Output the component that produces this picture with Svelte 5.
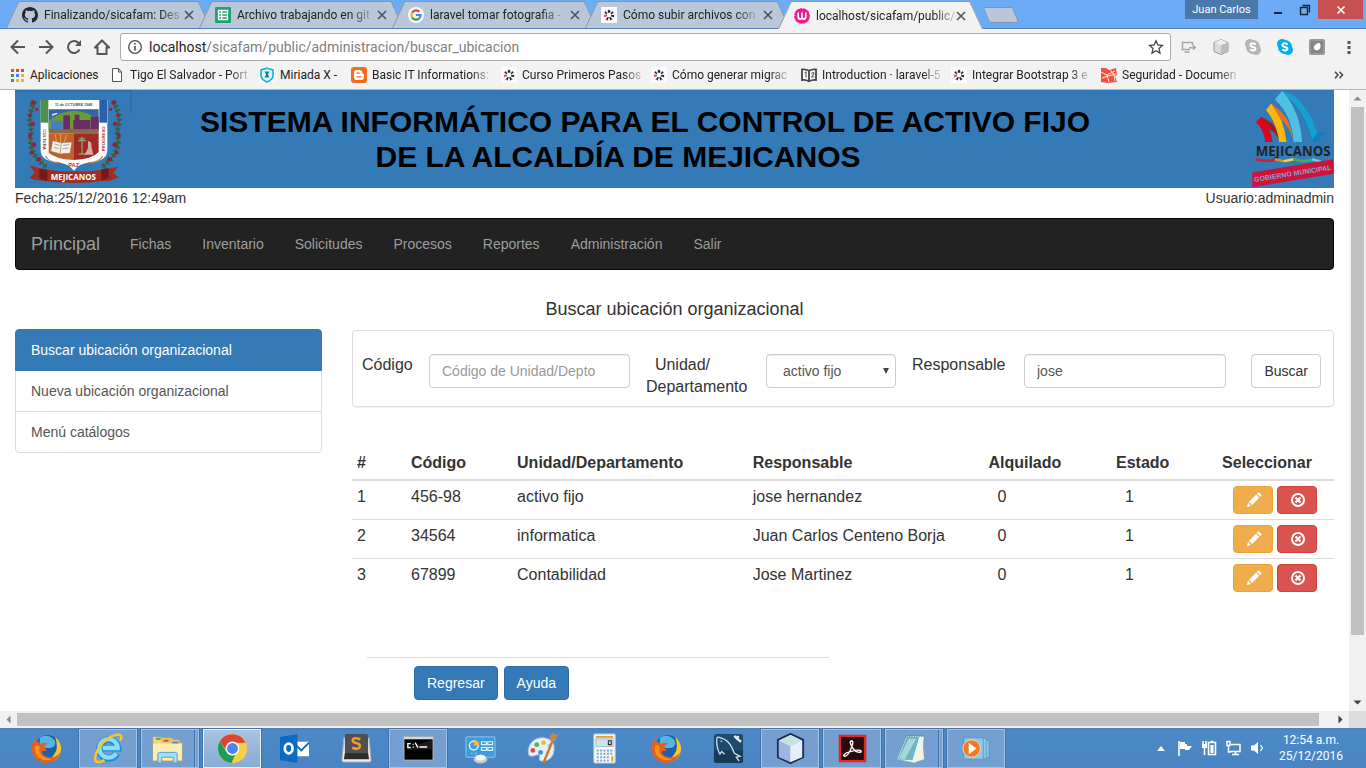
<script>
  const tabs = [
    { icon: 'github', title: 'Finalizando/sicafam: Des' },
    { icon: 'sheets', title: 'Archivo trabajando en git' },
    { icon: 'google', title: 'laravel tomar fotografia -' },
    { icon: 'styde', title: 'Cómo subir archivos con' },
    { icon: 'wamp', title: 'localhost/sicafam/public/', active: true }
  ];

  const bookmarks = [
    { icon: 'apps', title: 'Aplicaciones', size: 'apps' },
    { icon: 'file', title: 'Tigo El Salvador - Port' },
    { icon: 'miriada', title: 'Miriada X -', size: 'short' },
    { icon: 'blogger', title: 'Basic IT Informations:' },
    { icon: 'styde', title: 'Curso Primeros Pasos' },
    { icon: 'styde', title: 'Cómo generar migrac' },
    { icon: 'book', title: 'Introduction · laravel-5' },
    { icon: 'styde', title: 'Integrar Bootstrap 3 e' },
    { icon: 'laravel', title: 'Seguridad - Documen' }
  ];

  const menu = ['Fichas', 'Inventario', 'Solicitudes', 'Procesos', 'Reportes', 'Administración', 'Salir'];
  const side = ['Buscar ubicación organizacional', 'Nueva ubicación organizacional', 'Menú catálogos'];

  const rows = [
    { codigo: '456-98', unidad: 'activo fijo', responsable: 'jose hernandez', alquilado: 0, estado: 1 },
    { codigo: '34564', unidad: 'informatica', responsable: 'Juan Carlos Centeno Borja', alquilado: 0, estado: 1 },
    { codigo: '67899', unidad: 'Contabilidad', responsable: 'Jose Martinez', alquilado: 0, estado: 1 }
  ];

  const programs = [
    { icon: 'firefox', name: 'Firefox' },
    { icon: 'ie', name: 'Internet Explorer', open: true },
    { icon: 'explorer', name: 'Explorador', open: true, stacked: true },
    { icon: 'chrome', name: 'Chrome', open: true, current: true },
    { icon: 'outlook', name: 'Outlook' },
    { icon: 'sublime', name: 'Sublime Text' },
    { icon: 'cmd', name: 'Consola', open: true },
    { icon: 'panel', name: 'Panel de control' },
    { icon: 'paint', name: 'Paint' },
    { icon: 'calc', name: 'Calculadora' },
    { icon: 'firefox', name: 'Firefox' },
    { icon: 'mysql', name: 'MySQL Workbench' },
    { icon: 'netbeans', name: 'NetBeans', open: true },
    { icon: 'acrobat', name: 'Acrobat', open: true },
    { icon: 'notepad', name: 'Bloc de notas', open: true, stacked: true },
    { icon: 'media', name: 'Reproductor', open: true }
  ];

  let codigo = $state('');
  let responsable = $state('jose');
</script>

{#snippet favicon(name)}
  <svg class="fav" viewBox="0 0 16 16" aria-hidden="true">
    {#if name === 'github'}
      <path fill="#24292e" d="M8 0C3.58 0 0 3.58 0 8c0 3.54 2.29 6.53 5.47 7.59.4.07.55-.17.55-.38 0-.19-.01-.82-.01-1.49-2.01.37-2.53-.49-2.69-.94-.09-.23-.48-.94-.82-1.13-.28-.15-.68-.52-.01-.53.63-.01 1.08.58 1.23.82.72 1.21 1.87.87 2.33.66.07-.52.28-.87.51-1.07-1.78-.2-3.64-.89-3.64-3.95 0-.87.31-1.59.82-2.15-.08-.2-.36-1.02.08-2.12 0 0 .67-.21 2.2.82a7.6 7.6 0 0 1 4 0c1.53-1.04 2.2-.82 2.2-.82.44 1.1.16 1.92.08 2.12.51.56.82 1.27.82 2.15 0 3.07-1.87 3.75-3.65 3.95.29.25.54.73.54 1.48 0 1.07-.01 1.93-.01 2.2 0 .21.15.46.55.38A8 8 0 0 0 16 8c0-4.42-3.58-8-8-8z" />
    {:else if name === 'sheets'}
      <rect width="16" height="16" rx="1" fill="#23a172" />
      <path fill="none" stroke="#fff" stroke-width="1.3" d="M3.5 3.5h9v9h-9zM3.5 6.5h9M3.5 9.5h9M6.7 3.5v9" />
    {:else if name === 'google'}
      <circle cx="8" cy="8" r="8" fill="#f8f9fb" />
      <g fill="none" stroke-width="2.2">
        <path stroke="#ea4335" d="M4 5.8A4.6 4.6 0 0 1 11.4 4.8" />
        <path stroke="#fbbc05" d="M4 10.2A4.6 4.6 0 0 1 4 5.8" />
        <path stroke="#34a853" d="M11 11.6A4.6 4.6 0 0 1 4 10.2" />
        <path stroke="#4285f4" d="M8 8h4.6A4.6 4.6 0 0 1 11 11.6" />
      </g>
    {:else if name === 'styde'}
      <rect width="16" height="16" fill="#fcfcfd" />
      <path fill="#1d2638" d="m7 2.500 1 1 1-1 .4 3.300H6.700zM3 5.300l1.200-.2.500-1.300 1.600 3-.6.700zM13 5.300l-1.200-.2-.5-1.300-1.600 3 .6.700zM9.800 8.200l3.600-.4-.6 1.200.7 1.200-3.400-.6zM6.800 9.800l1 .7-1.300 3.200-.8-1.100-1.400.1zM9.200 9.800l-1 .7 1.300 3.200.8-1.100 1.400.1z" />
      <path fill="#e0474c" d="m2.600 7.600 3.600.4-.2 1.300-3.200 1 .5-1.400z" />
    {:else if name === 'wamp'}
      <rect x="1" y="1" width="14" height="14" rx="5" fill="#f21b8e" />
      <path fill="none" stroke="#fff" stroke-width="1.600" d="M4.200 4.500v4q0 2.600 2 2.600T8 8.800V4.500v4.300q0 2.300 1.900 2.300t1.900-2.600v-4" />
      <circle cx="8" cy="8" r="7.400" fill="none" stroke="#f21b8e" stroke-dasharray="3 1" />
    {:else if name === 'apps'}
      <path fill="#dd4b3e" d="M2 2h3v3H2zM7 2h3v3H7zM12 2h3v3h-3z" />
      <path fill="#3f9a5b" d="M2 7h3v3H2zM2 12h3v3H2z" />
      <path fill="#4a7fe0" d="M7 7h3v3H7z" />
      <path fill="#e9b42f" d="M12 7h3v3h-3zM7 12h3v3H7zM12 12h3v3h-3z" />
    {:else if name === 'file'}
      <path fill="#fff" stroke="#555" d="M3.500 1.500h6l3 3.500v9.500h-9zM9.500 1.500V5h3" />
    {:else if name === 'miriada'}
      <rect width="16" height="16" fill="#fff" />
      <path fill="#dff6f9" stroke="#1ab3c9" stroke-width="1.700" d="M8 1.200 14 3v5.500q0 4-6 6.500-6-2.500-6-6.500V3z" />
      <path fill="#137f96" d="M5.500 4.500h5L8.900 7.500l1.600 3h-5l1.600-3z" />
    {:else if name === 'blogger'}
      <rect width="16" height="16" rx="3" fill="#f26a1b" />
      <path fill="#fff" d="M5.600 3h3q2.600 0 2.600 2.700 0 1 .9 1 .9.100.9 1.200v2.200Q13 13 10.200 13H5.800Q3 13 3 10.200V5.800Q3 3 5.600 3z" />
      <path stroke="#f26a1b" stroke-width="1.300" stroke-linecap="round" d="M6 6.200h2.300M6 9.800h4" />
    {:else if name === 'book'}
      <path fill="#fff" stroke="#444" stroke-width="1.800" d="M1 2.500q4-.5 7 1.300 3-1.800 7-1.300V13q-4-.5-7 1.300Q5 12.500 1 13zM8 4v10" />
      <path fill="none" stroke="#666" stroke-width="1.200" d="M3.500 5.500 5 5v5.500M10.500 6.500q2.500-2 2.300.3L10.800 10h2.500" />
    {:else if name === 'laravel'}
      <path fill="#f4503c" d="M0 1h5l3 2 7-2 1 7-2 1 2 6-9 1-7-1z" />
      <path stroke="#fbe9e6" fill="none" d="M0 5 6 8l8-4M6 8l2 7M1 11l6-2 8-2M9 2l4 6 1 6" />
    {/if}
  </svg>
{/snippet}

{#snippet program(name)}
  <svg class="prog" viewBox="0 0 32 32" aria-hidden="true">
    {#if name === 'firefox'}
      <circle cx="17" cy="15" r="13" fill="#1f5fa8" />
      <path fill="#56b3e6" d="M9 5q8-5 15 2 3 5-2 8-8 2-13-3z" />
      <path fill="#f6c42c" d="M25 4q7 6 6 14-2 11-13 12l6-8q5-6 1-18z" />
      <path fill="#e4601c" d="M4 6q-4 6-3 12 2 12 15 13 11-1 14-11-5 6-11 5-7-1-8-6l5-1q0-2-3-3 3-4 5-4-4-2-7 0-3 0-4-2Q5 8 4 6z" />
      <path fill="#f7941e" d="M5 12q-3 8 3 13 6 5 14 2-9 0-13-6-1-4 0-7z" />
    {:else if name === 'ie'}
      <path fill="none" stroke="#1b8fd6" stroke-width="7" d="M24.500 21a9.500 9.500 0 1 1 1-5.500H10" />
      <path fill="none" stroke="#8bdcfa" stroke-width="4.500" d="M24 21a9.500 9.500 0 1 1 1.500-5.500H10" />
      <path fill="none" stroke="#f6c62d" stroke-width="2.600" d="M28 8q4-8-5-6Q9 7 4 19q-5 12 3 11 2 0 5-2" />
    {:else if name === 'explorer'}
      <path fill="#f0d67d" stroke="#cda94b" stroke-width=".6" d="M1 4h8l1 2h12l1 4h8v19H1z" />
      <path fill="#e9c35c" d="M10 5h10v5H10zM19 7h9v5h-9z" />
      <path fill="#52a552" d="M4 5h5v2H4z" /><path fill="#d8523c" d="M12 7h5v2h-5z" /><path fill="#3b8fd6" d="M21 9h6v2h-6z" />
      <path fill="#fbeeb5" d="M1 11h30v17H1z" />
      <path fill="#a6dcf4" stroke="#4ca3d4" d="M6 31V22q0-2 2-2h16q2 0 2 2v9h-4v-6H10v6z" />
    {:else if name === 'chrome'}
      <circle cx="16" cy="16" r="15" fill="#f9cf45" />
      <path fill="#dc4437" d="M3 8.500a15 15 0 0 1 26.500 1.500H16q-6 0-7 7z" />
      <path fill="#1f9d58" d="M3 8.500 9.800 19.500q3 5 9 3L15 31A15 15 0 0 1 3 8.500z" />
      <circle cx="16" cy="16" r="7.200" fill="#f3f6fb" /><circle cx="16" cy="16" r="5.600" fill="#4a86ee" />
    {:else if name === 'outlook'}
      <path fill="#fff" d="M17 9h14v15H17z" />
      <path fill="none" stroke="#0a6cc0" stroke-width="2" d="m18 13 5 5 8-8" />
      <path fill="#0a6cc0" d="m1 4 18-3v30L1 28z" />
      <ellipse cx="10" cy="16" rx="4" ry="5" fill="none" stroke="#fff" stroke-width="2.800" />
    {:else if name === 'sublime'}
      <path fill="#ededed" stroke="#aaa" d="m3 5-2 23q0 2 2 2h26q2 0 2-2L29 5z" />
      <rect x="4" y="1" width="24" height="22" rx="2" fill="#505050" />
      <path fill="#2d2d2d" d="M4 21h24l1 6H3z" />
      <path fill="none" stroke="#f79a34" stroke-width="2.600" d="M20 6.500q-7-2.500-8 .8 0 2.600 4 3.200T19.500 14q-1 3.500-8 1.300" />
    {:else if name === 'cmd'}
      <path fill="#000" stroke="#b9b9b9" d="M1 4h30v24H1z" /><path fill="#d8d8d8" d="M1 4h30v2.500H1z" />
      <path fill="#1d1d1d" d="M2 17 30 7v10z" />
      <path fill="none" stroke="#fff" stroke-width="1.400" d="M8 11H5v4h3M10.500 11v1M10.500 14v1M12.500 10l3 5M17 14.500h8" />
    {:else if name === 'panel'}
      <rect x="1" y="4" width="30" height="21" rx="1" fill="#3d9bdc" stroke="#8ccaf2" />
      <circle cx="9" cy="13" r="4.500" fill="none" stroke="#e1f3fd" stroke-width="1.500" /><path fill="#f6b73c" d="M9 13V7q5 0 6 6z" />
      <path fill="none" stroke="#dff2fc" stroke-width="1.200" d="M17 9h5v3h-5zM23.500 9h5v3h-5zM17 15h5v3h-5zM23.500 15h5v3h-5z" />
      <circle cx="7" cy="21" r="1" fill="#f6b73c" /><circle cx="11" cy="21" r="1" fill="#f6b73c" />
      <ellipse cx="16" cy="27" rx="7" ry="4.500" fill="#c6cacf" /><ellipse cx="16" cy="25.500" rx="5" ry="3" fill="#f4f5f6" />
    {:else if name === 'paint'}
      <path fill="#e6f1fa" stroke="#a8c4dc" d="M3 12Q8 4 18 5q11 2 10 12-1 12-13 12-3 0-2-4t-4-2-7 0q-2-5 1-11z" />
      <circle cx="6" cy="18" r="2.500" fill="#e24c3d" /><circle cx="10" cy="12" r="2.500" fill="#59b24c" /><circle cx="17" cy="10" r="2.500" fill="#f3b63a" /><circle cx="14" cy="20" r="2.500" fill="#3a8ed4" /><circle cx="23" cy="13" r="2" fill="#9ed3f0" />
      <path stroke="#d6742b" stroke-width="2.500" d="M26 9 17 31" /><path fill="#b98a5c" d="m23 4 3-4 6 2-3 7-5-1z" />
    {:else if name === 'calc'}
      <rect x="5" y="1" width="22" height="30" rx="1" fill="#f4f8fb" stroke="#b7cbdc" /><path fill="#f39b32" d="M7 3h18v2H7z" />
      <path fill="#cfe2f0" stroke="#8eabc2" stroke-width=".7" d="M7 6h18v8H7z" /><path fill="none" stroke="#333" stroke-width="1.200" d="M20 8h3v4h-3z" />
      <path stroke="#7ea6c9" stroke-width="2" stroke-dasharray="2 1.500" d="M8 18h17M8 21.500h17M8 25h14M8 28.500h14" /><path stroke="#f39b32" stroke-width="2" d="M24 24v5.500" />
    {:else if name === 'mysql'}
      <rect x="1" y="1" width="30" height="30" rx="3" fill="#1f4a6b" /><path fill="#173a56" d="M1 18h30v10q0 3-3 3H4q-3 0-3-3z" />
      <path fill="none" stroke="#d5e4ef" stroke-width="1.300" d="M7 22Q3 13 4 6q0-3 4-1 8 2 12 11l2 5 6 3-4 1 3 4M7 22l2-3 3 3M8 8l1 1" />
      <path stroke="#e9f1f7" stroke-width="2.400" fill="none" d="m22 3 3 3 4 3M25 6l1-3" />
    {:else if name === 'netbeans'}
      <path fill="#e6f0f8" stroke="#1c2a5c" stroke-width="2" d="M16 1 29 7v18l-13 6L3 25V7z" />
      <path fill="#c6e2dc" d="M16 2 28 8l-12 6L4 8z" /><path fill="#9cb4e2" d="m4 8 12 6v16L4 25z" /><path fill="#e7edfa" d="m28 8-12 6v16l12-5z" />
    {:else if name === 'acrobat'}
      <path fill="#2b0a0b" stroke="#e0281f" stroke-width="2.500" d="M3 3h26v26H3z" />
      <path fill="none" stroke="#fff" stroke-width="1.500" d="M8 24q4 0 8-12 1-4-1-4-3 1 1 7 3 5 8 5 2-1 0-2-4-1-9 1-6 1-8 4 0 1 1 1z" />
    {:else if name === 'notepad'}
      <path fill="#e9f5f6" stroke="#7ba8ae" stroke-width=".6" d="M11 3h18l-2 24-8 4L1 27z" />
      <path fill="#6fb5bd" d="M11 4h13L17 28 2 27z" /><path fill="#a5d7db" d="M13 6h8L9 27l-6-1z" /><path fill="#f8f4da" d="m27 5 2 22-9 3z" />
      <path stroke="#617e86" stroke-width="2" stroke-dasharray="1 1.500" d="M11 3h18" />
    {:else if name === 'media'}
      <path fill="#8fc7ea" stroke="#4b94c6" stroke-width=".8" d="M3 5h20v22H3zM23 5l3 1v20l-3 1M26 7l3 1v17l-3 1" />
      <circle cx="11" cy="16" r="9" fill="#ee7b22" stroke="#fbd5b4" /><path fill="#fff" d="m8 10 8 6-8 6z" />
    {/if}
  </svg>
{/snippet}

<div class="desktop">
  <header class="browser">
    <div class="strip">
      {#each tabs as tab}
        <div class="tab" class:active={tab.active}>
          {@render favicon(tab.icon)}
          <span class="tab-title fade">{tab.title}</span>
          <button class="tab-close" aria-label="Cerrar pestaña">
            <svg viewBox="0 0 10 10" width="10" height="10"><path d="m1 1 8 8M9 1 1 9" stroke="#4f5257" stroke-width="1.600" /></svg>
          </button>
        </div>
      {/each}
      <button class="new-tab" aria-label="Nueva pestaña"></button>
      <div class="window-buttons">
        <button class="profile">Juan Carlos</button>
        <button class="win" aria-label="Minimizar"><svg viewBox="0 0 10 10" width="10" height="10"><path d="M1 8h8" stroke="#1b2430" stroke-width="2" /></svg></button>
        <button class="win" aria-label="Restaurar"><svg viewBox="0 0 12 12" width="12" height="12"><path d="M1.500 3.500h7v7h-7zM3.500 1.500h7v7" fill="none" stroke="#1b2430" stroke-width="1.400" /></svg></button>
        <button class="win-close" aria-label="Cerrar"><svg viewBox="0 0 10 10" width="10" height="10"><path d="m1.500 1.500 7 7M8.500 1.500l-7 7" stroke="#fff" stroke-width="1.600" /></svg></button>
      </div>
    </div>

    <div class="toolbar">
      <button class="tool" aria-label="Atrás"><svg viewBox="0 0 16 16"><path d="M15 8H2M8 1.500 1.500 8 8 14.500" /></svg></button>
      <button class="tool" aria-label="Adelante"><svg viewBox="0 0 16 16"><path d="M1 8h13M8 1.500 14.500 8 8 14.500" /></svg></button>
      <button class="tool" aria-label="Recargar"><svg viewBox="0 0 16 16"><path d="M13.500 10.500A6 6 0 1 1 12.500 4" /><path class="solid" d="M15 1v6H9z" /></svg></button>
      <button class="tool" aria-label="Inicio"><svg viewBox="0 0 16 16"><path d="M1 8.500 8 1.500l7 7h-2.500V15h-9V8.500z" /></svg></button>
      <div class="omnibox">
        <svg viewBox="0 0 16 16" width="16" height="16" aria-hidden="true"><circle cx="8" cy="8" r="6.300" fill="none" stroke="#4d4d4d" stroke-width="1.300" /><path d="M8 7v4.500M8 4v1.600" stroke="#4d4d4d" stroke-width="1.600" /></svg>
        <span class="url"><b>localhost</b>/sicafam/public/administracion/buscar_ubicacion</span>
        <button class="star" aria-label="Marcador"><svg viewBox="0 0 16 16" width="16" height="16"><path d="m8 1.800 1.900 4.200 4.500.5L11 9.600l1 4.500-4-2.300-4 2.300 1-4.500-3.400-3.100 4.500-.5z" fill="none" stroke="#444" stroke-width="1.300" /></svg></button>
      </div>
      <div class="extensions">
        <button class="ext" aria-label="Transmitir"><svg viewBox="0 0 16 16"><path d="M9 10.500H1.500v-7h10v3M3.500 13h5" fill="none" stroke="#a7a7a7" stroke-width="1.500" /><path d="M8 8h4V5.500L15.500 8.500 12 11.500V9.500H8z" fill="#a7a7a7" /></svg></button>
        <button class="ext" aria-label="Cubo"><svg viewBox="0 0 16 16"><path d="m8 .5 7 3v9l-7 3-7-3v-9z" fill="#dadada" stroke="#999" /><path d="m8 6 6.500-2.500V12L8 15z" fill="#bcbcbc" /><path d="m1.500 3.500 6.500-3 6.500 3L8 6z" fill="#eee" /></svg></button>
        <button class="ext" aria-label="Skype desconectado"><svg viewBox="0 0 16 16"><circle cx="5" cy="5" r="5" fill="#b5b5b5" /><circle cx="11" cy="11" r="5" fill="#b5b5b5" /><circle cx="8" cy="8" r="7" fill="#b5b5b5" /><path d="M10.800 5.400Q6 3 5.400 5.800q0 1.800 2.600 2.200t2.500 2.200Q9.800 12.500 5.200 10.600" fill="none" stroke="#fff" stroke-width="1.900" /></svg></button>
        <button class="ext" aria-label="Skype"><svg viewBox="0 0 16 16"><circle cx="5" cy="5" r="5" fill="#00aff0" /><circle cx="11" cy="11" r="5" fill="#00aff0" /><circle cx="8" cy="8" r="7" fill="#00aff0" /><path d="M10.800 5.400Q6 3 5.400 5.800q0 1.800 2.600 2.200t2.500 2.200Q9.800 12.500 5.200 10.600" fill="none" stroke="#fff" stroke-width="1.900" /></svg></button>
        <button class="ext" aria-label="Pluma"><svg viewBox="0 0 16 16"><rect width="16" height="16" rx="2" fill="#9a9a9a" /><rect x="2" y="2" width="12" height="12" fill="#858585" /><path d="M11 4q2 6-3 7.500-4-.5-3-4Q7 3.500 11 4z" fill="#fff" /></svg></button>
        <button class="ext" aria-label="Menú"><svg viewBox="0 0 16 16"><path d="M6.500 2h3v3h-3zM6.500 7h3v3h-3zM6.500 12h3v3h-3z" fill="#555" /></svg></button>
      </div>
    </div>

    <nav class="bookmarks" aria-label="Marcadores">
      {#each bookmarks as mark}
        <a class="bookmark {mark.size ?? ''}" href="#marcador">{@render favicon(mark.icon)}<span class:fade={!mark.size}>{mark.title}</span></a>
      {/each}
      <button class="more" aria-label="Más marcadores"><svg viewBox="0 0 10 8" width="10" height="8"><path d="m1 .8 3 3.200-3 3.200M5.500.8l3 3.200-3 3.200" fill="none" stroke="#444" stroke-width="1.500" /></svg></button>
    </nav>
  </header>

  <div class="viewport">
    <main class="page">
      <div class="banner">
        <svg class="arms" viewBox="45 6 351 294" role="img" aria-label="Escudo de Mejicanos">
          <path fill="#2c6ca5" d="M45 6h349v4H45zM390 6h4v70h-4z" />
          <g fill="none" stroke="#3c5a3a" stroke-width="4">
            <path d="M108 40Q78 90 96 130q-20 60 44 108M336 40q34 50 14 90 20 60-44 108" />
            <path stroke-width="16" stroke-dasharray="5 9" d="M104 40Q78 90 96 130q-20 60 44 108M340 40q30 50 10 90 20 60-44 108" />
          </g>
          <g fill="#8f2530">
            <circle cx="98" cy="44" r="7" /><circle cx="110" cy="64" r="5" /><circle cx="90" cy="82" r="6" /><circle cx="98" cy="108" r="7" /><circle cx="90" cy="142" r="6" /><circle cx="102" cy="170" r="7" /><circle cx="94" cy="194" r="6" /><circle cx="116" cy="214" r="7" />
            <circle cx="342" cy="44" r="7" /><circle cx="332" cy="64" r="5" /><circle cx="354" cy="82" r="6" /><circle cx="346" cy="108" r="7" /><circle cx="356" cy="142" r="6" /><circle cx="344" cy="170" r="7" /><circle cx="350" cy="194" r="6" /><circle cx="328" cy="214" r="7" />
          </g>
          <path fill="#a32c22" d="M88 232q60 20 132 18 74 2 134-14l-14 20 16 12q-28 14-46 10-90 14-176 0-22 2-46-8l16-16z" />
          <path fill="#741b17" d="M118 242l24 4v34l-24-8zM326 240l-22 4v34l22-8z" />
          <path fill="#fff" d="M122 36h200v150q0 30-44 36-44 4-56 26-14-22-58-26-42-6-42-36z" />
          <path fill="#4f8f4a" d="M122 36h23v68h-23z" /><path fill="#2b5fa8" d="M298 36h23v68h-23z" />
          <path fill="#3365a5" d="M146 64h150v64H146z" /><path fill="#6c9a35" d="M146 98q40-30 76-30 40 0 74 30v26H146z" />
          <path fill="#e4e9f3" d="M156 78l16-4v4l-16 6z" /><path fill="#4b7cc4" d="M160 100h28v26h-28zM154 82h5v42h-5z" />
          <path fill="#6b2a6b" d="M190 82h20v44h-20zM220 96h50v28h-50zM224 80h14v20h-14zM272 86h24v38h-24z" />
          <path fill="#8b6a4a" d="M146 124h150v12H146z" />
          <path fill="#c3602b" d="M146 136h74v80q-56-4-74-22z" /><path fill="#a22a25" d="M220 136h76v56q-20 22-76 24z" />
          <path fill="none" stroke="#f0a34c" stroke-width="3" d="m166 140 4 24M182 138v26M200 140l-8 24" />
          <path fill="#f4f0e4" stroke="#8a7b62" stroke-width="2" d="m158 158 26 6 32-2-6 34-28 2-30-8z" /><path stroke="#8a7b62" stroke-width="2" d="m184 164-4 32M164 168l14 4M162 178l14 4M190 172l18-2M188 182l18-2" />
          <path fill="none" stroke="#8fa06a" stroke-width="4" d="M246 146v50M234 158h24M238 150q8 8 16 0M236 198h22" /><path fill="#d9a9a3" d="M264 160q12 0 10 14l6 26h-26l10-20z" />
          <path fill="none" stroke="#b98a5a" stroke-width="4" d="M136 204q10 20 44 20M308 204q-10 20-44 20" />
          <text x="221" y="54" font-size="11" font-weight="700" text-anchor="middle" fill="#555" font-family="Liberation Sans, sans-serif">11 de OCTUBRE 1948</text>
          <text transform="translate(128 124) rotate(90)" font-size="13" font-weight="700" fill="#a3372c" font-family="Liberation Sans, sans-serif">CULTURA</text>
          <text transform="translate(314 190) rotate(-90)" font-size="13" font-weight="700" fill="#a3372c" font-family="Liberation Sans, sans-serif">PROGRESO</text>
          <text x="221" y="238" font-size="17" font-weight="700" text-anchor="middle" fill="#a3372c" font-family="Liberation Sans, sans-serif">PAZ</text>
          <text x="220" y="277" font-size="24" font-weight="700" text-anchor="middle" fill="#fff" font-family="Open Sans, sans-serif">MEJICANOS</text>
        </svg>
        <h1>SISTEMA INFORMÁTICO PARA EL CONTROL DE ACTIVO FIJO <span>DE LA ALCALDÍA DE MEJICANOS</span></h1>
        <svg class="brand-mark" viewBox="455 6 247 294" role="img" aria-label="Mejicanos Gobierno Municipal">
          <path fill="#e2001a" d="m467 102 16-16q28 30 34 76h-22q-4-38-28-60z" /><path fill="#9f1d22" d="m483 86 34 20q14 18 18 50-10-26-26-30z" />
          <path fill="#f9b80e" d="m497 66 16-20q38 44 46 116h-22q-8-60-40-96z" /><path fill="#dd7426" d="m513 46 30 24q30 30 36 86-14-46-36-60z" />
          <path fill="#4fc0df" d="m524 34 22-26q54 60 60 154h-26q-4-80-56-128z" /><path fill="#15a0cf" d="m546 8 34 12q58 54 72 122-8 8-14 20-20-86-72-132z" />
          <path fill="#0f7fc0" d="M636 162q4-30 48-30-22 8-26 30z" />
          <text x="579" y="204" font-size="40" font-weight="700" text-anchor="middle" fill="#1f2429" font-family="Open Sans, sans-serif">MEJICANOS</text>
          <g fill="none" stroke-width="8"><path stroke="#cf2136" d="M466 214q30 8 58 2" /><path stroke="#e58a2d" d="M524 214l26 6" /><path stroke="#f2d43b" d="M550 220l30-6" /><path stroke="#56ab3c" d="M580 214l28 6" /><path stroke="#3daf70" d="M608 220l28-4" /><path stroke="#74c8e4" d="m636 214 28 8" /></g>
          <path fill="#cf1238" d="m456 254 243-40 2 44-245 40z" />
          <text transform="translate(579 264) rotate(-9)" font-size="21" font-weight="700" text-anchor="middle" fill="#7fa3cd" font-family="Liberation Sans, sans-serif">GOBIERNO MUNICIPAL</text>
        </svg>
      </div>
      <div class="status"><span>Fecha:25/12/2016 12:49am</span><span>Usuario:adminadmin</span></div>

      <nav class="navbar">
        <a class="brand" href="#principal">Principal</a>
        {#each menu as entry}<a href="#menu">{entry}</a>{/each}
      </nav>

      <h4>Buscar ubicación organizacional</h4>

      <div class="columns">
        <aside class="list-group">
          {#each side as entry, i}<a href="#opcion" class:active={i === 0}>{entry}</a>{/each}
        </aside>

        <section class="content">
          <form class="search" onsubmit={(e) => e.preventDefault()}>
            <label for="codigo">Código</label>
            <input id="codigo" type="text" placeholder="Código de Unidad/Depto" bind:value={codigo} />
            <label for="unidad" class="unit">&nbsp;&nbsp;Unidad/<br />Departamento</label>
            <div class="select">
              <select id="unidad"><option>activo fijo</option><option>informatica</option><option>Contabilidad</option></select>
              <svg viewBox="0 0 6 6" width="6" height="6" aria-hidden="true"><path d="M0 0h6L3 6z" fill="#444" /></svg>
            </div>
            <label for="responsable" class="owner">Responsable</label>
            <input id="responsable" type="text" bind:value={responsable} />
            <button class="btn default">Buscar</button>
          </form>

          <table>
            <colgroup><col class="c1" /><col class="c2" /><col class="c3" /><col class="c3" /><col class="c5" /><col class="c2" /><col class="c7" /></colgroup>
            <thead>
              <tr><th>#</th><th>Código</th><th>Unidad/Departamento</th><th>Responsable</th><th>Alquilado</th><th>Estado</th><th>Seleccionar</th></tr>
            </thead>
            <tbody>
              {#each rows as row, i}
                <tr>
                  <td>{i + 1}</td><td>{row.codigo}</td><td>{row.unidad}</td><td>{row.responsable}</td>
                  <td class="inset">{row.alquilado}</td><td class="inset">{row.estado}</td>
                  <td class="inset">
                    <div class="actions">
                      <button class="btn edit" aria-label="Editar"><svg viewBox="0 0 16 16" width="16" height="16"><path fill="#fff" d="m1 15 1-4.200L4.900 14zM3 9.800 10.200 2.600l3.100 3.100L6 13zM11 1.800l1-1q.8-.5 1.500.1l1.600 1.600q.6.7.1 1.500l-1 1z" /></svg></button>
                      <button class="btn remove" aria-label="Eliminar"><svg viewBox="0 0 16 16" width="16" height="16"><circle cx="8" cy="8" r="6" fill="none" stroke="#fff" stroke-width="2" /><path stroke="#fff" stroke-width="2.200" d="m5.500 5.500 5 5M10.500 5.500l-5 5" /></svg></button>
                    </div>
                  </td>
                </tr>
              {/each}
            </tbody>
          </table>

          <hr />
          <div class="footer-buttons"><button class="btn primary">Regresar</button><button class="btn primary">Ayuda</button></div>
        </section>
      </div>
    </main>
    <div class="vscroll" aria-hidden="true">
      <svg viewBox="0 0 17 17"><path d="m4.500 10.500 4-4 4 4z" fill="#8a8a8a" /></svg>
      <div class="vtrack"><div class="vthumb"></div></div>
      <svg viewBox="0 0 17 17"><path d="m4.500 6.500 4 4 4-4z" fill="#404040" /></svg>
    </div>
    <div class="hscroll" aria-hidden="true">
      <svg viewBox="0 0 17 17"><path d="m10.500 4.500-4 4 4 4z" fill="#8a8a8a" /></svg>
      <div class="htrack"><div class="hthumb"></div></div>
      <svg viewBox="0 0 17 17"><path d="m6.500 4.500 4 4-4 4z" fill="#404040" /></svg>
    </div>
    <div class="corner"></div>
  </div>

  <footer class="taskbar">
    <div class="programs">
      {#each programs as p}
        <button class="slot" class:open={p.open} class:current={p.current} class:stacked={p.stacked} aria-label={p.name}>{@render program(p.icon)}</button>
      {/each}
    </div>
    <div class="tray">
      <svg class="up" viewBox="0 0 8 5"><path fill="#fff" d="M0 5 4 0l4 5z" /></svg>
      <svg viewBox="0 0 16 16"><path fill="none" stroke="#fff" stroke-width="1.600" d="M2 1v15" /><path fill="#fff" d="M3 2h5v2h2v2h5l-3 4H8V9H3z" /></svg>
      <svg viewBox="0 0 16 16"><path fill="none" stroke="#fff" stroke-width="1.600" d="M7.500 2.500h7v12h-7zM9.500 1.500h3M2 1v4M5 1v4M3.500 8v7" /><path fill="#fff" d="M1 4h5v4H1zM9.500 5h3v8h-3z" /></svg>
      <svg viewBox="0 0 16 16"><path fill="none" stroke="#fff" stroke-width="1.500" d="M6 4.500h9v7H5M7 14.500h7M10.500 12v2M2 1.500h3v4H2zM3.500 6v6H6" /></svg>
      <svg viewBox="0 0 16 16"><path fill="#fff" d="M2 5.500h3L9 2v12l-4-3.500H2z" /><path fill="none" stroke="#fff" stroke-width="1.300" d="m11.500 5 2 3-2 3" /></svg>
      <div class="clock"><span>12:54 a.m.</span><span>25/12/2016</span></div>
    </div>
  </footer>
</div>

<style>
  :global(body) { margin: 0; background: #fff; }
  .desktop, .desktop :global(*) { box-sizing: border-box; }
  .desktop { display: flex; flex-direction: column; min-height: 100vh; font: 14px/20px "Liberation Sans", Arial, sans-serif; color: #333; }
  button { font: inherit; color: inherit; padding: 0; border: 0; background: none; }
  a { color: inherit; text-decoration: none; }
  svg { display: block; flex: none; }

  .browser { font: 12px/16px Roboto, "Open Sans", sans-serif; color: #222; background: #f2f2f2; border-bottom: 1px solid #b5b5b5; }
  .strip { display: flex; height: 29px; padding-left: 6px; background: #6cabf5; border-bottom: 1px solid #4f7fb8; }
  .tab { position: relative; isolation: isolate; display: flex; align-items: center; flex: 0 0 205px; height: 28px; margin-right: -12px; padding: 2px 17px 0 16px; }
  .tab::before, .tab::after { content: ""; position: absolute; z-index: -1; top: 1px; bottom: 0; background: #b9c7d9; border-top: 1px solid #8494aa; }
  .tab::before { left: 0; right: 50%; transform: skewX(-25deg); transform-origin: 0 100%; border-left: 1px solid #8494aa; }
  .tab::after { left: 49%; right: 0; transform: skewX(25deg); transform-origin: 100% 100%; border-right: 1px solid #8494aa; }
  .tab.active { height: 29px; z-index: 1; }
  .tab.active::before, .tab.active::after { background: #f2f2f2; }
  .fav { width: 16px; height: 16px; }
  .fade { white-space: nowrap; mask-image: linear-gradient(to right, #000 85%, rgba(0, 0, 0, .2)); }
  .tab-title { margin-left: 6px; }
  .tab-close { margin-left: auto; }
  .new-tab { width: 30px; height: 16px; margin: 7px 0 0 15px; background: #b9c7d9; border: 1px solid #8296b2; border-radius: 2px; transform: skewX(22deg); }
  .window-buttons { display: flex; height: 19px; margin-left: auto; padding-right: 3px; }
  .profile { width: 73px; margin-right: 6px; background: #4a78ab; color: #fff; text-align: center; font-size: 11px; }
  .win { display: grid; place-items: center; width: 27px; }
  .win-close { display: grid; place-items: center; width: 45px; background: #c75050; }

  .toolbar { display: flex; align-items: center; height: 36px; padding: 4px 9px 4px 10px; }
  .tool { width: 16px; height: 16px; margin-right: 12px; }
  .tool svg { width: 16px; height: 16px; fill: none; stroke: #555; stroke-width: 2; }
  .tool .solid { fill: #555; stroke: none; }
  .tool:nth-of-type(4) { margin-right: 10px; }
  .omnibox { display: flex; align-items: center; flex: 1; height: 28px; padding: 0 6px; background: #fff; border: 1px solid #aaa; border-radius: 3px; }
  .url { margin-left: 6px; font-size: 14px; color: #808080; }
  .url b { font-weight: 400; color: #222; }
  .star { margin-left: auto; }
  .extensions { display: flex; gap: 16px; margin-left: 10px; }
  .ext svg { width: 16px; height: 16px; }

  .bookmarks { display: flex; align-items: center; height: 24px; padding: 0 22px 4px 9px; }
  .bookmark { display: flex; flex: 0 0 150px; gap: 5px; }
  .bookmark.apps { flex-basis: 100px; }
  .bookmark.short { flex-basis: 92px; }
  .more { margin-left: auto; }

  .viewport { flex: 1; display: grid; grid-template-columns: 1fr 17px; grid-template-rows: 1fr 17px; }
  .page { min-width: 0; padding: 0 15px; }
  .banner { display: flex; height: 98px; background: #337ab7; }
  .arms { width: 117px; height: 98px; }
  .brand-mark { width: 82px; height: 98px; margin-left: auto; }
  h1 { margin: 14px 0 0 68px; font-size: 30px; line-height: 35px; text-align: center; color: #000; white-space: nowrap; }
  h1 span { display: block; padding-right: 54px; }
  .status { display: flex; justify-content: space-between; }
  .navbar { display: flex; align-items: center; gap: 1px; height: 52px; margin-top: 10px; background: #222; border: 1px solid #080808; border-radius: 4px; color: #9d9d9d; }
  .navbar a { padding: 15px; }
  .navbar .brand { padding-right: 14px; font-size: 18px; }
  h4 { margin: 29px 0 10px; font-size: 18px; line-height: 20px; font-weight: 400; text-align: center; }
  .columns { display: grid; grid-template-columns: 307fr 982fr; gap: 30px; align-items: start; }
  .list-group { display: flex; flex-direction: column; }
  .list-group a { padding: 10px 15px; margin-bottom: -1px; border: 1px solid #ddd; color: #555; }
  .list-group a:first-child { border-radius: 4px 4px 0 0; }
  .list-group a:last-child { border-radius: 0 0 4px 4px; margin-bottom: 0; }
  .list-group .active { position: relative; background: #337ab7; border-color: #337ab7; color: #fff; }
  .content { min-width: 0; padding-top: 1px; }

  .search { display: grid; grid-template-columns: 67px 201fr 136px 130fr 128px 202fr 95px; align-items: start; height: 77px; padding: 23px 12px 0 9px; border: 1px solid #ddd; border-radius: 4px; box-shadow: 0 1px 1px rgba(0, 0, 0, .05); }
  label { font-size: 16px; line-height: 22px; }
  .unit, .owner { padding-left: 16px; }
  .unit { white-space: nowrap; }
  input, select { width: 100%; height: 34px; padding: 6px 12px; border: 1px solid #ccc; border-radius: 4px; background: #fff; box-shadow: inset 0 1px 1px rgba(0, 0, 0, .075); color: #555; font: inherit; }
  input::placeholder { color: #999; opacity: 1; }
  select { appearance: none; padding-left: 16px; }
  .select { position: relative; }
  .select svg { position: absolute; right: 7px; top: 14px; }
  .btn { height: 34px; padding: 0 12px; border: 1px solid; border-radius: 4px; }
  .default { justify-self: end; border-color: #ccc; background: #fff; }
  .primary { background: #337ab7; border-color: #2e6da4; color: #fff; }

  table { width: 100%; margin-top: 40px; table-layout: fixed; border-collapse: collapse; font-size: 16px; line-height: 22px; }
  .c1 { width: 5.5%; } .c2 { width: 10.8%; } .c3 { width: 24%; } .c5 { width: 13%; } .c7 { width: 11.9%; }
  th, td { padding: 5px; text-align: left; vertical-align: top; white-space: nowrap; }
  th { border-bottom: 2px solid #ddd; }
  td { border-top: 1px solid #ddd; }
  td.inset { padding-left: 14px; }
  .actions { display: flex; gap: 4px; padding-left: 2px; }
  .actions .btn { display: grid; place-items: center; width: 40px; height: 28px; }
  .edit { background: #f0ad4e; border-color: #eea236; }
  .remove { background: #d9534f; border-color: #d43f3a; }
  hr { width: 47%; margin: 60px 0 8px 15px; border: 0; border-top: 1px solid #ddd; }
  .footer-buttons { display: flex; gap: 6px; padding-left: 62px; }

  .vscroll { display: flex; flex-direction: column; background: #f1f1f1; }
  .vscroll svg, .hscroll svg { width: 17px; height: 17px; }
  .vtrack { flex: 1; padding: 0 2px; }
  .vthumb { height: 90%; background: #c1c1c1; }
  .hscroll { display: flex; background: #f1f1f1; }
  .htrack { flex: 1; padding: 2px 0; }
  .hthumb { width: 99%; height: 13px; background: #c1c1c1; }
  .corner { background: #dcdcdc; }

  .taskbar { display: flex; justify-content: space-between; height: 40px; background: linear-gradient(#4a82bd, #4c89c6 4px, #4a84c2); }
  .programs { display: flex; gap: 4px; padding-left: 17px; }
  .slot { display: grid; place-items: center; width: 58px; height: 39px; margin-top: 1px; }
  .open { background: #749fd0; border: 1px solid #a2c3e6; box-shadow: 0 0 0 1px #3f73ac; }
  .current { background: linear-gradient(#a9c4e2, #86abd5); border-color: #eaf3fb; }
  .stacked { background: linear-gradient(to right, #749fd0 52px, #3f73ac 52px, #3f73ac 53px, #a2c3e6 53px, #749fd0 54px); padding-right: 5px; }
  .prog { width: 31px; height: 31px; }
  .tray { display: flex; align-items: center; gap: 8px; padding-right: 25px; }
  .tray svg { width: 16px; height: 16px; }
  .tray .up { width: 8px; height: 5px; margin-right: 4px; }
  .clock { display: flex; flex-direction: column; align-items: center; width: 60px; margin-left: 8px; font: 12px/16px Roboto, "Open Sans", sans-serif; color: #fff; }
</style>
